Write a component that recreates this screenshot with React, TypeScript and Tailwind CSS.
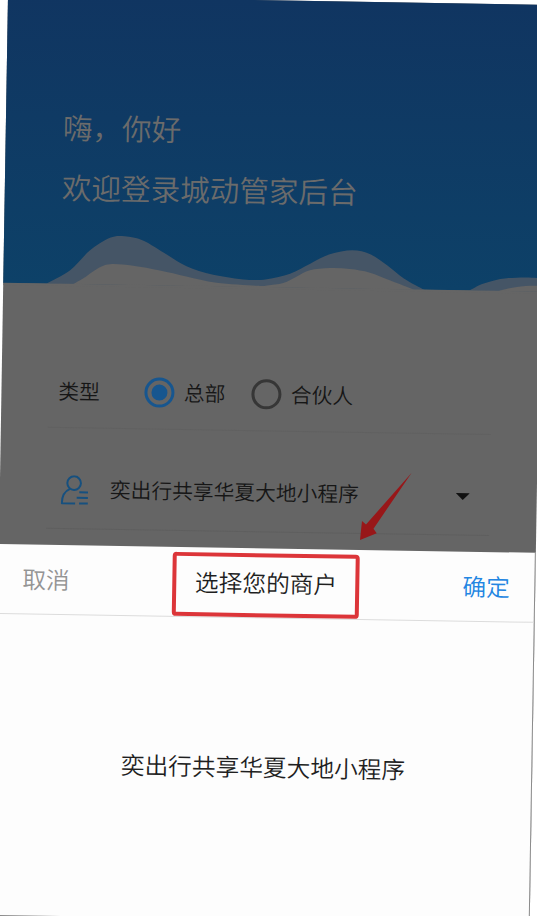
import { useState } from "react";

type Point = [number, number];

const MERCHANTS = ["奕出行共享华夏大地小程序"];
const ACCOUNT_TYPES = ["总部", "合伙人"];

const BACK_WAVES: Point[][] = [
  [[43, 287], [66.4, 273.5], [86, 253.2], [106, 240.1], [120.8, 238.3], [139, 242.2], [163, 255.8], [183, 267.2], [209.8, 275.3], [243.5, 279.7], [263.6, 278.8], [286.6, 273], [306.6, 262.6], [326, 253], [348.5, 248.6], [366.5, 252.3], [383.5, 263], [400.5, 276], [421, 287]],
  [[466, 287], [480.5, 279.6], [503.5, 273.9], [537, 274], [537, 287]],
];
const FRONT_WAVES: Point[][] = [
  [[70, 287], [79.7, 281.3], [93.4, 271.4], [106.5, 266.5], [129.5, 267.7], [156.5, 272], [183, 277.5], [213.3, 283.3], [253.4, 285.6], [264, 285.1], [280, 282.5], [293.5, 275.6], [306.4, 269.3], [326.4, 266.7], [346.4, 267.3], [366.4, 270.6], [386.4, 278], [411, 287]],
  [[495, 287], [513.7, 282.4], [537, 281.3], [537, 287]],
];

// Catmull-Rom through the points, closed along the bottom
function smoothPath(points: Point[]): string {
  let d = `M${points[0].join(" ")}`;
  for (let i = 0; i < points.length - 1; i++) {
    const p0 = points[i - 1] ?? points[i];
    const p1 = points[i];
    const p2 = points[i + 1];
    const p3 = points[i + 2] ?? p2;
    d += ` C${p1[0] + (p2[0] - p0[0]) / 6} ${p1[1] + (p2[1] - p0[1]) / 6} ${p2[0] - (p3[0] - p1[0]) / 6} ${p2[1] - (p3[1] - p1[1]) / 6} ${p2[0]} ${p2[1]}`;
  }
  return d + "Z";
}

function Waves() {
  return (
    <svg className="absolute inset-0" width="537" height="289" viewBox="0 0 537 289">
      {BACK_WAVES.map((w, i) => <path key={i} d={smoothPath(w)} fill="#455566" />)}
      {FRONT_WAVES.map((w, i) => <path key={i} d={smoothPath(w)} fill="#656565" />)}
      <path d="M0 286.7H537V289H0Z" fill="#656565" />
    </svg>
  );
}

function UserIcon() {
  return (
    <svg width="28" height="30" viewBox="0 0 28 30" fill="none" stroke="#16507f" strokeWidth="2">
      <circle cx="13.2" cy="8" r="6.8" />
      <path d="M9.2 13.8C4.2 16 1.2 20.5 1.2 28.2H14.5" strokeLinejoin="round" />
      <path d="M18.5 17H27.2M16 22.5H27.2M18.5 28.2H27.2" />
    </svg>
  );
}

function Radio({ checked }: { checked: boolean }) {
  return (
    <span className={`flex size-[30px] items-center justify-center rounded-full border-[3px] ${checked ? "border-[#17568f]" : "border-[#363636]"}`}>
      {checked && <span className="size-4 rounded-full bg-[#17568f]" />}
    </span>
  );
}

export default function App() {
  const [type, setType] = useState(0);

  return (
    <div className="relative h-[916px] w-[537px] overflow-hidden bg-white font-['Noto_Sans_CJK_SC',sans-serif] font-[350]">
      <div className="mt-[-4.3px] ml-[8.4px] flex h-[919.5px] w-[536.5px] origin-top-left rotate-[0.95deg] flex-col bg-[#656565]">
        <header className="relative h-[287px] shrink-0 bg-linear-to-b from-[#103561] to-[#0d4168] pt-[100px] pl-[57px] text-[29.6px] leading-[60px] whitespace-nowrap text-[#6b6b6b]">
          <Waves />
          <h1 className="relative">嗨，你好</h1>
          <p className="relative">欢迎登录城动管家后台</p>
        </header>

        <main className="h-[261px] shrink-0 px-[47px] text-[20.75px] text-[#161616]">
          <div className="flex h-[144px] items-center border-b border-[#616161] pt-[71px] pl-[10px]">
            <span className="w-[86px]">类型</span>
            {ACCOUNT_TYPES.map((label, i) => (
              <button key={label} onClick={() => setType(i)} className="mr-[26px] flex items-center gap-[9.5px]">
                <Radio checked={type === i} />
                {label}
              </button>
            ))}
          </div>
          <div className="flex h-[101px] items-center border-b border-[#5f5f5f] pt-[24px] pl-[14px]">
            <UserIcon />
            <span className="-mt-[3px] ml-[21px] grow">{MERCHANTS[0]}</span>
            <svg className="mr-[20px]" width="14" height="8" viewBox="0 0 14 8">
              <path d="M0 0.5H14L7 7.5Z" fill="#101010" />
            </svg>
          </div>
        </main>

        <section className="flex grow flex-col border-r border-b border-[#8b8b8b] bg-[#fdfdfd] text-[23.7px] text-[#1f1f1f]">
          <div className="relative flex h-[70px] items-center justify-between border-b border-[#dcdcdc] pr-[24px] pl-[24px]">
            <button className="text-[#949494]">取消</button>
            <h2>选择您的商户</h2>
            <button className="text-[#2386e2]">确定</button>
            <div className="absolute top-[4.5px] left-[174px] h-[64px] w-[187px] rounded-[4px] border-4 border-[#dc3539]" />
          </div>
          <div className="flex h-[297px] items-center justify-center">{MERCHANTS[0]}</div>
        </section>
      </div>

      <svg className="absolute top-[470px] left-[355px]" width="60" height="74" viewBox="0 0 60 74">
        <path d="M56.7 2.7L18.5 58.7L21.7 63.3L5 70L7 51L11 54.5Z" fill="#981719" />
      </svg>
    </div>
  );
}
